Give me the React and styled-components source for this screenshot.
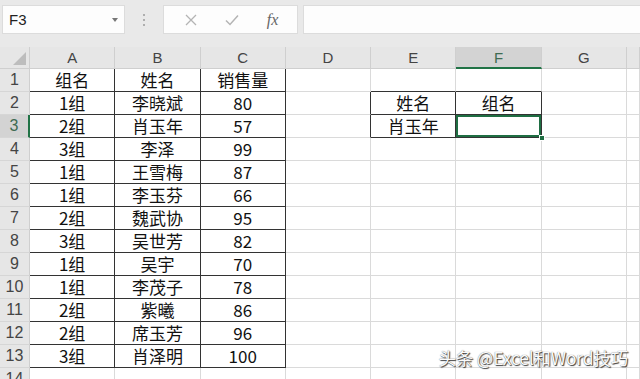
import React from 'react';
import styled, { createGlobalStyle } from 'styled-components';

const GlobalStyle = createGlobalStyle`
  html, body {
    margin: 0;
    padding: 0;
    background: #e9e9e9;
    overflow: hidden;
  }
  * { box-sizing: border-box; }
`;

const Page = styled.div`
  width: 640px;
  height: 379px;
  position: relative;
  overflow: hidden;
  font-family: "Noto Sans CJK SC", "Noto Sans", sans-serif;
  background: #e9e9e9;
`;

const Toolbar = styled.div`
  height: 47px;
  display: flex;
  align-items: flex-start;
  padding: 5px 0 0 2px;
`;

const NameBox = styled.div`
  width: 123px;
  height: 29px;
  background: #fdfdfd;
  border: 1px solid #dcdcdc;
  display: flex;
  align-items: center;
  justify-content: space-between;
  padding: 0 6px;
  font-family: "Liberation Sans", "Noto Sans", sans-serif;
  font-size: 15px;
  color: #222;
`;

const Caret = styled.span`
  width: 0;
  height: 0;
  border-left: 3px solid transparent;
  border-right: 3px solid transparent;
  border-top: 4px solid #777;
`;

const Dots = styled.div`
  width: 38px;
  height: 29px;
  display: flex;
  flex-direction: column;
  align-items: center;
  justify-content: center;
  gap: 3px;
  span {
    width: 2px;
    height: 2px;
    background: #9a9a9a;
    border-radius: 1px;
  }
`;

const FormulaTools = styled.div`
  width: 135px;
  height: 29px;
  background: #fdfdfd;
  border: 1px solid #dcdcdc;
  display: flex;
  align-items: center;
  justify-content: space-around;
  padding: 0 4px 0 6px;
`;

const ToolIcon = styled.span`
  width: 30px;
  display: flex;
  justify-content: center;
  color: #b4b4b4;
`;

const Fx = styled.span`
  font-family: "Liberation Serif", serif;
  font-style: italic;
  font-size: 16px;
  color: #666;
  width: 30px;
  text-align: center;
`;

const FormulaInput = styled.div`
  flex: 1;
  height: 29px;
  margin-left: 5px;
  background: #fdfdfd;
  border: 1px solid #dcdcdc;
  border-right: none;
`;

const Sheet = styled.div`
  display: grid;
  grid-template-columns: 30px repeat(7, 85.3px) 1fr;
  grid-template-rows: 22px repeat(14, 23px);
`;

const Corner = styled.div`
  background: #e6e6e6;
  border-right: 1px solid #cfcfcf;
  border-bottom: 1px solid #cfcfcf;
  position: relative;
  overflow: hidden;
  &::after {
    content: '';
    position: absolute;
    right: 3px;
    bottom: 3px;
    border-left: 13px solid transparent;
    border-bottom: 13px solid #bdbdbd;
  }
`;

const ColHead = styled.div`
  background: ${p => (p.$active ? '#d3d3d3' : '#e6e6e6')};
  border-right: 1px solid #cfcfcf;
  border-bottom: ${p => (p.$active ? '2px solid #217346' : '1px solid #cfcfcf')};
  display: flex;
  align-items: center;
  justify-content: center;
  font-family: "Liberation Sans", "Noto Sans", sans-serif;
  font-size: 15px;
  color: ${p => (p.$active ? '#3e6b52' : '#444')};
`;

const RowHead = styled.div`
  background: ${p => (p.$active ? '#d3d3d3' : '#e6e6e6')};
  border-right: ${p => (p.$active ? '2px solid #217346' : '1px solid #cfcfcf')};
  border-bottom: 1px solid #d6d6d6;
  display: flex;
  align-items: center;
  justify-content: center;
  font-family: "Liberation Sans", "Noto Sans", sans-serif;
  font-size: 16px;
  color: ${p => (p.$active ? '#3e6b52' : '#444')};
`;

const Cell = styled.div`
  position: relative;
  background: #fff;
  border-right: 1px solid ${p => (p.$r ? '#333' : '#dadada')};
  border-bottom: 1px solid ${p => (p.$b ? '#333' : '#dadada')};
  display: flex;
  align-items: center;
  justify-content: center;
  font-size: 17px;
  line-height: 22px;
  color: #111;
  white-space: nowrap;
  ${p => p.$selected && `
    box-shadow: inset 0 0 0 2px #1f6e43;
  `}
`;

const Handle = styled.span`
  position: absolute;
  right: -4px;
  bottom: -4px;
  width: 6px;
  height: 6px;
  background: #1f6e43;
  border: 1px solid #fff;
  z-index: 2;
`;

const Watermark = styled.div`
  position: absolute;
  right: 12px;
  bottom: 9px;
  font-size: 17.5px;
  letter-spacing: -0.2px;
  color: #fafafa;
  text-shadow: 1px 1px 1px rgba(0, 0, 0, 0.75), 0 0 1px rgba(0, 0, 0, 0.6);
`;

const cols = ['A', 'B', 'C', 'D', 'E', 'F', 'G', ''];

const data = [
  ['组名', '姓名', '销售量', '', '', ''],
  ['1组', '李晓斌', '80', '', '姓名', '组名'],
  ['2组', '肖玉年', '57', '', '肖玉年', ''],
  ['3组', '李泽', '99'],
  ['1组', '王雪梅', '87'],
  ['1组', '李玉芬', '66'],
  ['2组', '魏武协', '95'],
  ['3组', '吴世芳', '82'],
  ['1组', '吴宇', '70'],
  ['1组', '李茂子', '78'],
  ['2组', '紫曦', '86'],
  ['2组', '席玉芳', '96'],
  ['3组', '肖泽明', '100'],
  [],
];

// which cells get the dark table border on right / bottom
const darkRight = (r, c) =>
  (r <= 12 && c <= 2) || ((r === 1 || r === 2) && c >= 3 && c <= 5);
const darkBottom = (r, c) =>
  (r <= 12 && c <= 2) || (r <= 2 && (c === 4 || c === 5));

const App = () => {
  return (
    <Page>
      <GlobalStyle />
      <Toolbar>
        <NameBox>
          <span>F3</span>
          <Caret />
        </NameBox>
        <Dots>
          <span />
          <span />
          <span />
        </Dots>
        <FormulaTools>
          <ToolIcon>
            <svg width="14" height="14" viewBox="0 0 14 14">
              <path d="M2 2 L12 12 M12 2 L2 12" stroke="currentColor" strokeWidth="1.3" fill="none" />
            </svg>
          </ToolIcon>
          <ToolIcon>
            <svg width="16" height="14" viewBox="0 0 16 14">
              <path d="M2 7.5 L6 11.5 L14 2.5" stroke="currentColor" strokeWidth="1.5" fill="none" />
            </svg>
          </ToolIcon>
          <Fx>fx</Fx>
        </FormulaTools>
        <FormulaInput />
      </Toolbar>

      <Sheet>
        <Corner />
        {cols.map((c, i) => (
          <ColHead key={i} $active={c === 'F'}>{c}</ColHead>
        ))}
        {data.map((row, r) => (
          <React.Fragment key={r}>
            <RowHead $active={r === 2}>{r + 1}</RowHead>
            {cols.map((_, c) => (
              <Cell
                key={c}
                $r={darkRight(r, c)}
                $b={darkBottom(r, c)}
                $selected={r === 2 && c === 5}
              >
                {row[c] || ''}
                {r === 2 && c === 5 && <Handle />}
              </Cell>
            ))}
          </React.Fragment>
        ))}
      </Sheet>

      <Watermark>头条 @Excel和Word技巧</Watermark>
    </Page>
  );
};

export default App;
